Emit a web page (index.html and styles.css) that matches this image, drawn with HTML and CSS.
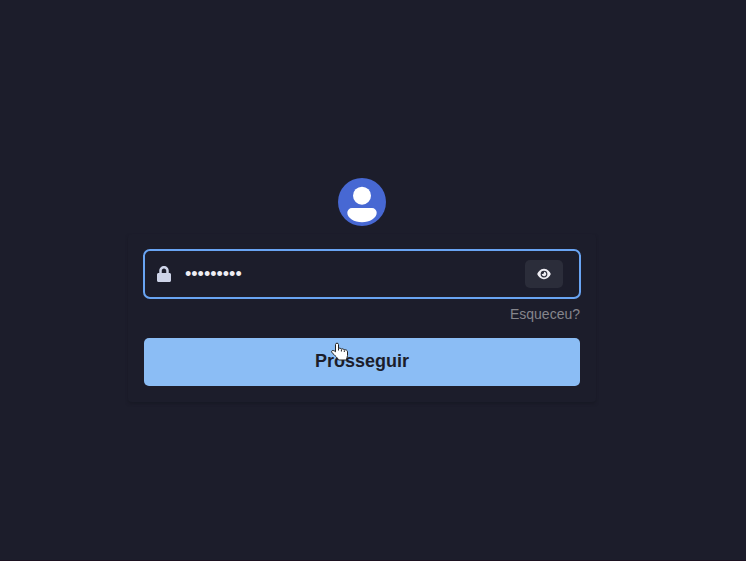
FILE: index.html
```html
<!DOCTYPE html>
<html lang="pt-BR">
<head>
<meta charset="utf-8">
<meta name="viewport" content="width=device-width, initial-scale=1">
<title>Prosseguir</title>
<link rel="stylesheet" href="styles.css">
</head>
<body>
<main class="page">
  <svg class="avatar" viewBox="0 0 48 48" aria-hidden="true">
    <circle cx="24" cy="24" r="24" fill="#4768d3"/>
    <circle cx="24" cy="17.700" r="9" fill="#fff"/>
    <path d="M14 30h20a4.700 4.700 0 0 1 4.700 4.700c0 5.300-7 9.500-14.700 9.500s-14.700-4.200-14.700-9.500A4.700 4.700 0 0 1 14 30z" fill="#fff"/>
  </svg>
  <form class="card">
    <div class="field">
      <svg class="lock" viewBox="0 0 448 512" aria-hidden="true">
        <path fill="currentColor" d="M400 224h-24v-72C376 68.200 307.800 0 224 0S72 68.200 72 152v72H48c-26.500 0-48 21.500-48 48v192c0 26.500 21.500 48 48 48h352c26.500 0 48-21.500 48-48V272c0-26.500-21.500-48-48-48zm-104 0H152v-72c0-39.700 32.300-72 72-72s72 32.300 72 72v72z"/>
      </svg>
      <input class="password" type="password" aria-label="Senha" value="senha1234">
      <button class="reveal" type="button" aria-label="Mostrar senha">
        <svg class="eye" viewBox="0 0 576 512" aria-hidden="true">
          <path fill="currentColor" d="M288 32c-80.800 0-145.500 36.800-192.600 80.600C48.600 156 17.300 208 2.500 243.700c-3.300 7.900-3.300 16.700 0 24.600C17.300 304 48.600 356 95.400 399.400C142.500 443.200 207.200 480 288 480s145.500-36.800 192.600-80.600c46.800-43.500 78.100-95.400 93-131.100c3.300-7.900 3.300-16.700 0-24.600c-14.900-35.700-46.200-87.700-93-131.100C433.500 68.800 368.800 32 288 32zM144 256a144 144 0 1 1 288 0 144 144 0 1 1-288 0zm144-64c0 35.300-28.700 64-64 64c-7.100 0-13.900-1.200-20.300-3.300c-5.500-1.800-11.900 1.600-11.700 7.400c.3 6.900 1.300 13.800 3.200 20.700c13.700 51.200 66.400 81.600 117.600 67.900s81.600-66.400 67.900-117.600c-11.100-41.500-47.800-69.400-88.600-71.100c-5.800-.2-9.200 6.100-7.400 11.700c2.100 6.400 3.300 13.200 3.300 20.300z"/>
        </svg>
      </button>
    </div>
    <a class="forgot" href="#">Esqueceu?</a>
    <button class="submit" type="submit">Prosseguir</button>
  </form>
</main>
<svg class="cursor" viewBox="0 0 18 20" aria-hidden="true">
  <path d="M4.500 2.500C4.500 .7 7.500 .7 7.500 2.500V6.500c1-.6 2.400-.3 2.800.6 1-.6 2.500-.2 2.800.8 1.600-.5 3.400.3 3.400 1.900V13.500c0 2-1 2.800-1.200 4.500H7.500C6.500 15.500 4.500 14.500 3 12.500 1.500 11 .2 10.500.6 9.300c.5-1.300 2.400-1 3.900.5z" fill="#fff" stroke="#222" stroke-linejoin="round"/>
  <path d="M7.500 6.500v2M10.400 7.500V9.500M13.300 8.500v1.500" fill="none" stroke="#222"/>
</svg>
</body>
</html>
```
FILE: styles.css
```css
* {
  box-sizing: border-box;
}

body {
  margin: 0;
  background: #1c1d2b;
  font-family: "Liberation Sans", Arial, sans-serif;
}

.page {
  min-height: 100vh;
  padding: 20px 22px 0 0;
  display: flex;
  flex-direction: column;
  align-items: center;
  justify-content: center;
  gap: 8px;
  border-bottom: 1px solid #1c1221;
}

.avatar {
  width: 48px;
  height: 48px;
}

.card {
  width: 100%;
  max-width: 468px;
  padding: 16px;
  display: flex;
  flex-direction: column;
  border-radius: 4px;
  box-shadow: 0 2px 3px #181925;
}

.field {
  height: 48px;
  padding: 0 17px 0 13px;
  display: flex;
  align-items: center;
  gap: 14px;
  border-radius: 6px;
  outline: 2px solid #69a4f3;
  outline-offset: -1px;
}

.lock {
  width: 14px;
  height: 16px;
  color: #cdd3e8;
}

.password {
  flex: 1;
  min-width: 0;
  padding: 0;
  border: 0;
  outline: 0;
  background: transparent;
  color: #eeedf3;
  font: 18px "Liberation Sans", Arial, sans-serif;
}

.reveal {
  width: 38px;
  height: 28px;
  padding: 0;
  display: flex;
  align-items: center;
  justify-content: center;
  border: 0;
  border-radius: 5px;
  background: #2b2d3a;
  color: #eeedf3;
}

.eye {
  width: 14px;
  height: 12px;
}

.forgot {
  align-self: flex-end;
  margin: 8px 0 16px;
  color: #85858b;
  font-size: 14px;
  line-height: 16px;
  text-decoration: none;
}

.submit {
  height: 48px;
  padding: 0 16px 2px;
  border: 0;
  border-radius: 5px;
  background: #8bbdf5;
  color: #1c1d2b;
  font: bold 18px "Liberation Sans", Arial, sans-serif;
}

.cursor {
  position: absolute;
  left: 331px;
  top: 342px;
  width: 18px;
  height: 20px;
}
```
